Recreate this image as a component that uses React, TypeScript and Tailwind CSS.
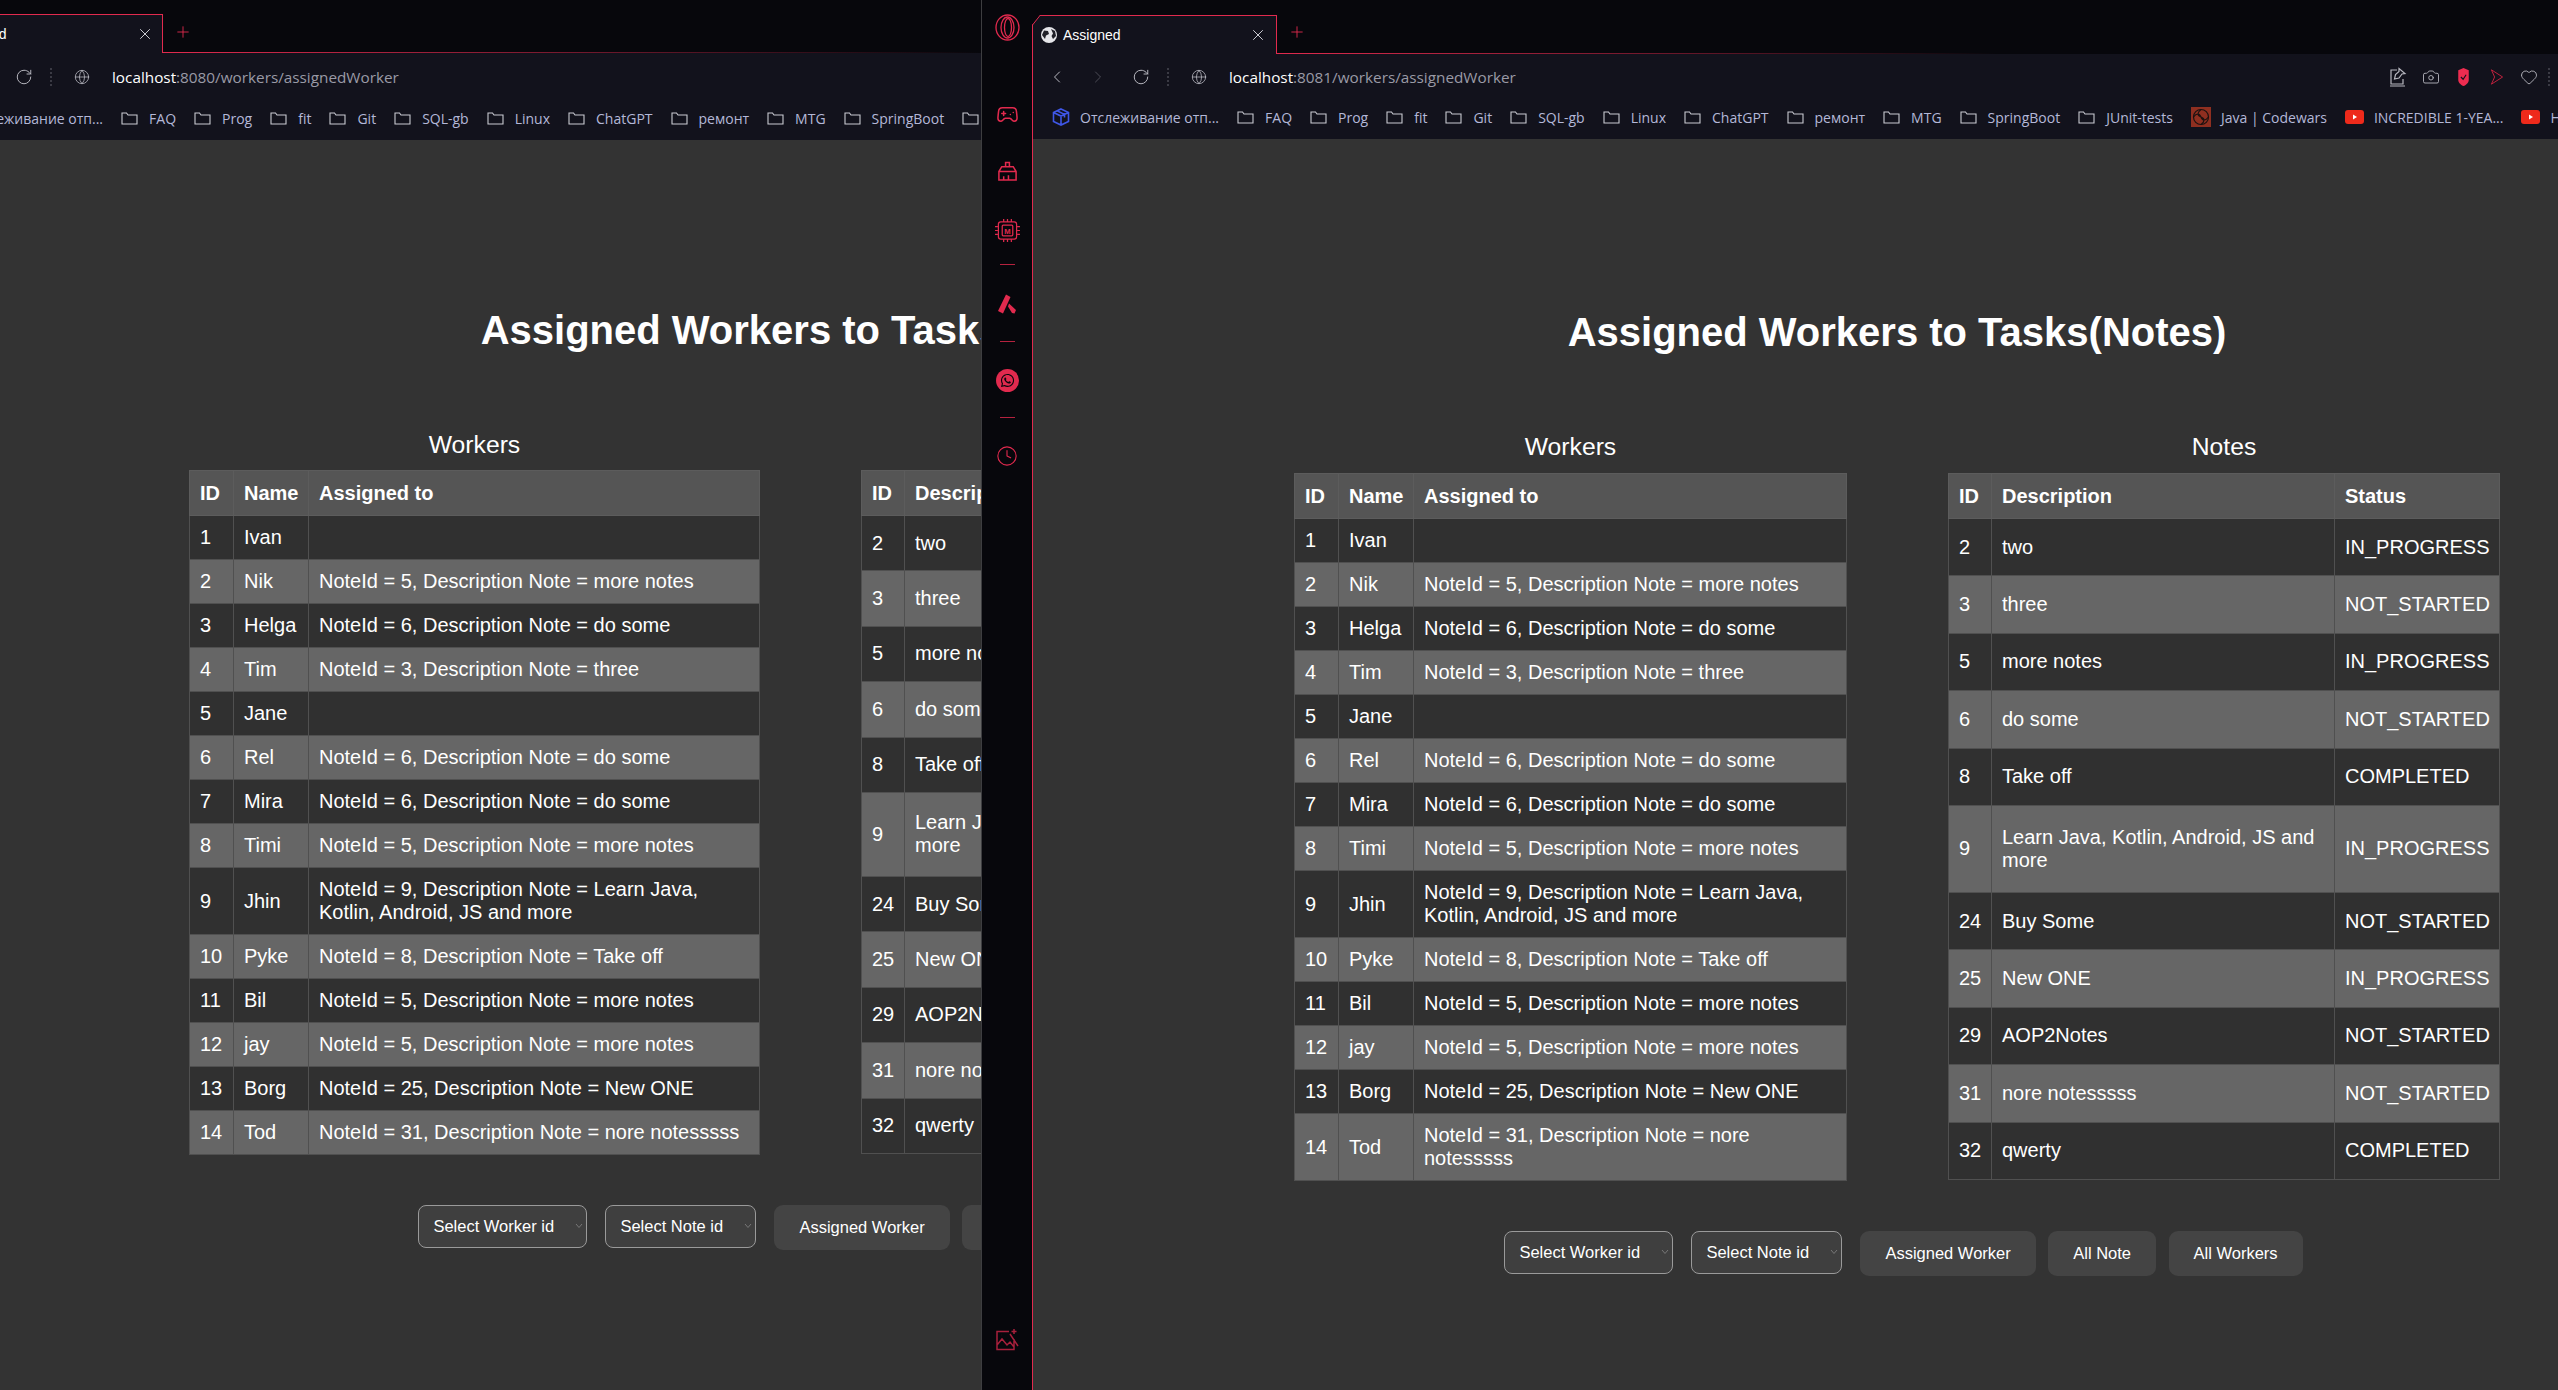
import { Camera, ChevronLeft, ChevronRight, Clock, Gamepad2, Globe, Heart, Plus, RotateCw, X } from "lucide-react";
import { FaWhatsapp } from "react-icons/fa";

const workers: [string, string, string][] = [
    ["1", "Ivan", ""],
    ["2", "Nik", "NoteId = 5, Description Note = more notes"],
    ["3", "Helga", "NoteId = 6, Description Note = do some"],
    ["4", "Tim", "NoteId = 3, Description Note = three"],
    ["5", "Jane", ""],
    ["6", "Rel", "NoteId = 6, Description Note = do some"],
    ["7", "Mira", "NoteId = 6, Description Note = do some"],
    ["8", "Timi", "NoteId = 5, Description Note = more notes"],
    ["9", "Jhin", "NoteId = 9, Description Note = Learn Java, Kotlin, Android, JS and more"],
    ["10", "Pyke", "NoteId = 8, Description Note = Take off"],
    ["11", "Bil", "NoteId = 5, Description Note = more notes"],
    ["12", "jay", "NoteId = 5, Description Note = more notes"],
    ["13", "Borg", "NoteId = 25, Description Note = New ONE"],
    ["14", "Tod", "NoteId = 31, Description Note = nore notesssss"],
];

const notes: [string, string, string][] = [
    ["2", "two", "IN_PROGRESS"],
    ["3", "three", "NOT_STARTED"],
    ["5", "more notes", "IN_PROGRESS"],
    ["6", "do some", "NOT_STARTED"],
    ["8", "Take off", "COMPLETED"],
    ["9", "Learn Java, Kotlin, Android, JS and more", "IN_PROGRESS"],
    ["24", "Buy Some", "NOT_STARTED"],
    ["25", "New ONE", "IN_PROGRESS"],
    ["29", "AOP2Notes", "NOT_STARTED"],
    ["31", "nore notesssss", "NOT_STARTED"],
    ["32", "qwerty", "COMPLETED"],
];

const folders = ["FAQ", "Prog", "fit", "Git", "SQL-gb", "Linux", "ChatGPT", "ремонт", "MTG", "SpringBoot"];

const FolderIcon = () => (
    <svg width="17" height="13" viewBox="0 0 17 13" fill="none" stroke="#c9cad2" strokeWidth="1.1" className="shrink-0">
        <path d="M1 1v11h15V3H7L5.500 1z" />
    </svg>
);

const YoutubeIcon = () => (
    <svg width="19" height="14" viewBox="0 0 19 14" className="shrink-0">
        <rect width="19" height="14" rx="3" fill="#ee2a1b" />
        <path d="M8 4.500l4 2.500-4 2.500z" fill="#fff" />
    </svg>
);

const CodewarsIcon = () => (
    <svg width="20" height="20" viewBox="0 0 20 20" fill="none" stroke="#1c1210" strokeWidth="1.2" className="shrink-0">
        <rect width="20" height="20" fill="#8f2f20" stroke="none" />
        <circle cx="10" cy="10" r="7.500" />
        <path d="M10 2.500c-4 3-4 6 0 7.500s4 4.500 0 7.500M2.500 10c3-4 6-4 7.500 0s4.500 4 7.500 0" />
    </svg>
);

const CubeIcon = () => (
    <svg width="18" height="18" viewBox="0 0 18 18" fill="none" stroke="#3f57e8" strokeWidth="1.6" className="shrink-0">
        <path d="M9 1l7.500 3.500v9L9 17l-7.500-3.500v-9zM1.500 4.500L9 8l7.500-3.500M9 8v9M5 2.800l7.500 3.600v3" />
    </svg>
);

const Bookmarks = ({ offset, extra }: { offset: string; extra?: boolean }) => (
    <div className={`flex items-center gap-[18px] h-[39px] pb-[5px] whitespace-nowrap text-[14px] text-[#b4b8d8] ${offset}`}>
        <div className="flex items-center gap-[10px]">
            <CubeIcon />
            <span>Отслеживание отп...</span>
        </div>
        {folders.map((name) => (
            <div key={name} className="flex items-center gap-[11px]">
                <FolderIcon />
                <span>{name}</span>
            </div>
        ))}
        <div className="flex items-center gap-[11px]">
            <FolderIcon />
            <span>JUnit-tests</span>
        </div>
        {extra && (
            <>
                <div className="flex items-center gap-[10px]">
                    <CodewarsIcon />
                    <span>Java | Codewars</span>
                </div>
                <div className="flex items-center gap-[10px]">
                    <YoutubeIcon />
                    <span>INCREDIBLE 1-YEA...</span>
                </div>
                <div className="flex items-center gap-[10px]">
                    <YoutubeIcon />
                    <span>How</span>
                </div>
            </>
        )}
    </div>
);

const TabStrip = ({ left }: { left?: boolean }) => (
    <div className={`flex shrink-0 bg-[#07070c] ${left ? "h-[53px]" : "h-[54px]"}`}>
        <div className={`relative flex items-center shrink-0 h-[39px] bg-[#12121c] border-t border-r border-[#e12a4e] text-[14px] text-white ${left ? "w-[163px] mt-[14px] pr-[8px]" : "w-[245px] mt-[15px] pr-[9px] border-l"}`}>
            {!left && (
                <>
                    <svg width="8" height="10" viewBox="0 0 8 10" className="absolute -top-px -left-px">
                        <path d="M0 0h8L0 10z" fill="#07070c" />
                        <path d="M8 .5L.5 10" stroke="#e12a4e" />
                    </svg>
                    <svg width="16" height="16" viewBox="0 0 16 16" className="ml-[8px] mr-[6px] shrink-0">
                        <circle cx="8" cy="8" r="8" fill="#e6e6ea" />
                        <path d="M3 3.500l4 .5 1 3-3 1.500-1 3.500L1 8zM10 2l4 2 1 5-3 3-1.500-3L12 6.500z" fill="#202028" />
                    </svg>
                    <span>Assigned</span>
                </>
            )}
            {left && <span className="-ml-[51px]">Assigned</span>}
            <X size={18} strokeWidth={1.2} className="ml-auto text-[#e0e0e6]" />
        </div>
        <div className="relative flex-1 min-w-0">
            <Plus size={18} strokeWidth={1.2} className="ml-[11px] mt-[23px] text-[#e12a4e]" />
            <div className={`absolute bottom-0 left-0 h-px bg-gradient-to-r from-[#e12a4e] to-transparent ${left ? "w-full" : "w-[720px]"}`} />
        </div>
    </div>
);

const Dots = () => <div className="h-[18px] border-l-2 border-dotted border-[#3a3a44]" />;

const WorkersTable = ({ width }: { width: string }) => (
    <table className={`table-fixed border-collapse text-[20px] leading-[23px] text-white ${width}`}>
        <thead>
            <tr className="h-[45px] bg-[#555]">
                <th className="w-[44px] border border-[#5c5c5c] px-[10px] text-left font-bold">ID</th>
                <th className="w-[75px] border border-[#5c5c5c] px-[10px] text-left font-bold">Name</th>
                <th className="border border-[#5c5c5c] px-[10px] text-left font-bold">Assigned to</th>
            </tr>
        </thead>
        <tbody>
            {workers.map((row, i) => (
                <tr key={row[0]} className={i % 2 ? "bg-[#666]" : "bg-[#303030]"}>
                    <td className="border border-[#505050] px-[10px] py-[10px]">{row[0]}</td>
                    <td className="border border-[#505050] px-[10px] py-[10px]">{row[1]}</td>
                    <td className="border border-[#505050] px-[10px] py-[10px]">{row[2]}</td>
                </tr>
            ))}
        </tbody>
    </table>
);

const NotesTable = ({ width, descWidth, rowH, tallH }: { width: string; descWidth: string; rowH: string; tallH: string }) => (
    <table className={`table-fixed border-collapse text-[20px] leading-[23px] text-white ${width}`}>
        <thead>
            <tr className="h-[45px] bg-[#555]">
                <th className="w-[43px] border border-[#5c5c5c] px-[10px] text-left font-bold">ID</th>
                <th className={`border border-[#5c5c5c] px-[10px] text-left font-bold ${descWidth}`}>Description</th>
                <th className="border border-[#5c5c5c] px-[10px] text-left font-bold">Status</th>
            </tr>
        </thead>
        <tbody>
            {notes.map((row, i) => (
                <tr key={row[0]} className={`${i % 2 ? "bg-[#666]" : "bg-[#303030]"} ${row[0] === "9" ? tallH : rowH}`}>
                    <td className="border border-[#505050] px-[10px]">{row[0]}</td>
                    <td className="border border-[#505050] px-[10px]">{row[1]}</td>
                    <td className="border border-[#505050] px-[10px] whitespace-nowrap">{row[2]}</td>
                </tr>
            ))}
        </tbody>
    </table>
);

const SelectBox = ({ label, width }: { label: string; width: string }) => (
    <div className={`relative shrink-0 ${width}`}>
        <select className="w-full h-[43px] appearance-none rounded-[8px] border border-[#9a9a9a] bg-[#3f3f3f] pl-[14px] text-[16.5px] text-white">
            <option>{label}</option>
        </select>
        <svg width="8" height="6" viewBox="0 0 8 6" fill="none" stroke="#777" className="absolute right-[4px] top-[18px]">
            <path d="M1 1l3 3.500L7 1" />
        </svg>
    </div>
);

const ActionButton = ({ label }: { label: string }) => (
    <button className="h-[45px] shrink-0 rounded-[9px] bg-[#444] px-[25px] text-[16.5px] text-white">{label}</button>
);

const Actions = ({ offset }: { offset: string }) => (
    <div className={`flex items-start gap-[18px] whitespace-nowrap ${offset}`}>
        <SelectBox label="Select Worker id" width="w-[169px]" />
        <SelectBox label="Select Note id" width="w-[151px]" />
        <div className="flex gap-[12.500px]">
            <ActionButton label="Assigned Worker" />
            <ActionButton label="All Note" />
            <ActionButton label="All Workers" />
        </div>
    </div>
);

const Side = () => (
    <div className="flex flex-col items-center w-[51px] shrink-0 bg-[#07070c] border-l border-[#3d3d40] text-[#e12a4e]">
        <svg width="25" height="27" viewBox="0 0 25 27" fill="none" stroke="currentColor" strokeWidth="1.3" className="mt-[14px]">
            <ellipse cx="12.500" cy="13.500" rx="11.500" ry="12.500" />
            <ellipse cx="12.500" cy="13.500" rx="6.500" ry="10.500" />
            <ellipse cx="13" cy="13.500" rx="3.500" ry="9" />
        </svg>
        <Gamepad2 size={23} strokeWidth={1.6} className="mt-[62px]" />
        <svg width="21" height="21" viewBox="0 0 22 22" fill="none" stroke="currentColor" strokeWidth="1.6" className="mt-[35px]">
            <path d="M9 6V1.500h4V6M5 6h12l3 5v9H2v-9zM2 11h18M7 20v-4M12 20v-5" />
        </svg>
        <svg width="25" height="23" viewBox="0 0 26 24" fill="none" stroke="currentColor" strokeWidth="1.3" className="mt-[37px]">
            <rect x="3.500" y="3" width="19" height="18" rx="2.500" />
            <rect x="7.500" y="6.500" width="11" height="11" rx="1" />
            <path d="M0 8h3M0 12h3M0 16h3M23 8h3M23 12h3M23 16h3M9 0v3M13 0v3M17 0v3M9 21v3M13 21v3M17 21v3" />
            <text x="13" y="15.500" textAnchor="middle" fontSize="8" fontWeight="700" fill="currentColor" stroke="none" fontFamily="Liberation Sans">M</text>
        </svg>
        <div className="w-[15px] h-px mt-[22px] bg-[#b5223f]" />
        <svg width="20" height="20" viewBox="0 0 20 20" fill="currentColor" className="mt-[29px]">
            <path d="M9 .5l4.500 2.500L6 19.500 1 17zM12 9.500L19 16l-1.500 3.500-2.500-.5-4-6.500z" />
        </svg>
        <div className="w-[15px] h-px mt-[27px] bg-[#b5223f]" />
        <div className="flex items-center justify-center w-[23px] h-[23px] mt-[27px] rounded-full bg-[#e12a4e]">
            <FaWhatsapp size={15} className="text-[#07070c]" />
        </div>
        <div className="w-[15px] h-px mt-[25px] bg-[#b5223f]" />
        <Clock size={22} strokeWidth={1.2} className="mt-[27px]" />
        <svg width="24" height="24" viewBox="0 0 24 24" fill="none" stroke="#a8203c" strokeWidth="1.5" className="mt-auto mb-[38px]">
            <path d="M14 3.500H2v18h17V11M2 17l5-6 5 6 3-3 4 5M6 7h.1M19 1v5M16.500 3.500h5M15 6l8 12" />
        </svg>
    </div>
);

export default function App() {
    return (
        <div className="flex w-[2558px] h-[1390px] overflow-hidden bg-[#333] font-['Liberation_Sans',sans-serif]">
            {/* left window */}
            <div className="flex flex-col w-[981px] shrink-0 overflow-hidden">
                <TabStrip left />
                <div className="shrink-0 bg-[#12121c] font-['Open_Sans',sans-serif]">
                    <div className="flex items-center h-[48px] pl-[15px] whitespace-nowrap">
                        <RotateCw size={18} strokeWidth={1.3} className="text-[#b8b8c0]" />
                        <div className="ml-[17px]"><Dots /></div>
                        <Globe size={16} strokeWidth={1.2} className="ml-[22px] text-[#b8b8c0]" />
                        <div className="ml-[22px] text-[15.300px] text-[#9a9aa6]"><span className="text-white">localhost</span>:8080/workers/assignedWorker</div>
                    </div>
                    <Bookmarks offset="-ml-[64px]" />
                </div>
                <div className="flex-1 min-h-0">
                    <div className="flex flex-col items-center w-[1618px] pt-[167px]">
                        <h1 className="h-[46px] ml-[2px] text-[40px] leading-[46px] font-bold text-white whitespace-nowrap">Assigned Workers to Tasks(Notes)</h1>
                        <div className="flex gap-[101px] mt-[78px]">
                            <div className="flex flex-col items-center">
                                <h2 className="h-[28px] mb-[11px] text-[24.700px] leading-[28px] text-white">Workers</h2>
                                <WorkersTable width="w-[571px]" />
                            </div>
                            <div className="flex flex-col items-center">
                                <h2 className="h-[28px] mb-[11px] text-[24.700px] leading-[28px] text-white">Notes</h2>
                                <NotesTable width="w-[568px]" descWidth="w-[355px]" rowH="h-[55.4px]" tallH="h-[84px]" />
                            </div>
                        </div>
                        <div className="mt-[50px]">
                            <Actions offset="ml-[17px]" />
                        </div>
                    </div>
                </div>
            </div>

            <Side />

            {/* right window */}
            <div className="flex flex-col flex-1 min-w-0 overflow-hidden">
                <TabStrip />
                <div className="flex-1 min-h-0 flex flex-col border-l border-[#e12a4e]">
                    <div className="shrink-0 bg-[#12121c] font-['Open_Sans',sans-serif] overflow-hidden">
                        <div className="flex items-center h-[46px] pl-[14px] pr-[8px] whitespace-nowrap">
                            <ChevronLeft size={20} strokeWidth={1.2} className="text-[#b8b8c0]" />
                            <ChevronRight size={20} strokeWidth={1.2} className="ml-[21px] text-[#4c4c56]" />
                            <RotateCw size={18} strokeWidth={1.3} className="ml-[24px] text-[#b8b8c0]" />
                            <div className="ml-[17px]"><Dots /></div>
                            <Globe size={16} strokeWidth={1.2} className="ml-[22px] text-[#b8b8c0]" />
                            <div className="ml-[22px] text-[15.300px] text-[#9a9aa6]"><span className="text-white">localhost</span>:8081/workers/assignedWorker</div>
                            <div className="ml-auto flex items-center gap-[15px] text-[#b8b8c0]">
                                <svg width="18" height="20" viewBox="0 0 18 20" fill="none" stroke="currentColor" strokeWidth="1.2">
                                    <path d="M8 3H2v14h12v-5M10 1.500l6 5-3 .5-3 4-4.500 1 1-4.500 3.500-3zM1 19h15" />
                                </svg>
                                <Camera size={18} strokeWidth={1.2} className="mr-[1px]" />
                                <svg width="15" height="18" viewBox="0 0 15 24" fill="#ee2c50" className="mr-[3px]">
                                    <path d="M7.500 0l7 3v13c0 4-4 7-7 8-3-1-7-4-7-8V3z" />
                                    <path d="M4 12l3 3 4-6" fill="none" stroke="#12121c" strokeWidth="1.5" />
                                </svg>
                                <svg width="16" height="16" viewBox="0 0 16 20" fill="none" stroke="#c5213f" strokeWidth="1.2">
                                    <path d="M1 1l14 9-14 9 4-9z" />
                                </svg>
                                <Heart size={18} strokeWidth={1.2} />
                                <div className="h-[18px] -ml-[5px] border-l-2 border-dotted border-[#3a3a44]" />
                            </div>
                        </div>
                        <Bookmarks offset="pl-[19px]" extra />
                    </div>
                    <div className="flex-1 min-h-0">
                        <div className="flex flex-col items-center w-[1728px] pt-[170px]">
                            <h1 className="h-[46px] text-[40px] leading-[46px] font-bold text-white whitespace-nowrap">Assigned Workers to Tasks(Notes)</h1>
                            <div className="flex gap-[101px] mt-[78px]">
                                <div className="flex flex-col items-center">
                                    <h2 className="h-[28px] mb-[12px] text-[24.700px] leading-[28px] text-white">Workers</h2>
                                    <WorkersTable width="w-[553px]" />
                                </div>
                                <div className="flex flex-col items-center">
                                    <h2 className="h-[28px] mb-[12px] text-[24.700px] leading-[28px] text-white">Notes</h2>
                                    <NotesTable width="w-[552px]" descWidth="w-[343px]" rowH="h-[57.4px]" tallH="h-[87px]" />
                                </div>
                            </div>
                            <div className="mt-[50px]">
                                <Actions offset="ml-[13px]" />
                            </div>
                        </div>
                    </div>
                </div>
            </div>
        </div>
    );
}
